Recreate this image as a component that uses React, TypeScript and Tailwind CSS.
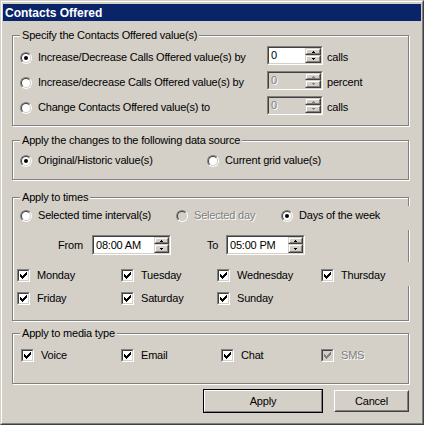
import React from 'react'

const disabledText = 'text-[#808080] [text-shadow:1px_1px_0_#fff]'

function Radio({ checked, disabled }: { checked?: boolean; disabled?: boolean }) {
    return (
        <span className="flex h-[12px] w-[12px] shrink-0 rounded-full border border-t-[#808080] border-l-[#808080] border-r-white border-b-white">
            <span
                className={`flex flex-1 items-center justify-center rounded-full border border-t-[#404040] border-l-[#404040] border-r-[#d4d0c8] border-b-[#d4d0c8] ${disabled ? 'bg-[#d4d0c8]' : 'bg-white'}`}
            >
                {checked && <span className="h-[4px] w-[4px] rounded-full bg-black" />}
            </span>
        </span>
    )
}

function CheckMark({ color }: { color: string }) {
    return (
        <svg width="7" height="7" viewBox="0 0 7 7" shapeRendering="crispEdges" fill={color}>
            <rect x="6" y="0" width="1" height="1" />
            <rect x="5" y="1" width="2" height="1" />
            <rect x="0" y="2" width="1" height="1" />
            <rect x="4" y="2" width="3" height="1" />
            <rect x="0" y="3" width="2" height="1" />
            <rect x="3" y="3" width="3" height="1" />
            <rect x="0" y="4" width="5" height="1" />
            <rect x="1" y="5" width="3" height="1" />
            <rect x="2" y="6" width="1" height="1" />
        </svg>
    )
}

function Checkbox({ label, disabled }: { label: string; disabled?: boolean }) {
    return (
        <label className="flex h-[13px] items-center">
            <span className="flex h-[13px] w-[13px] shrink-0 border border-t-[#808080] border-l-[#808080] border-r-white border-b-white">
                <span
                    className={`flex flex-1 items-center justify-center border border-t-[#404040] border-l-[#404040] border-r-[#d4d0c8] border-b-[#d4d0c8] ${disabled ? 'bg-[#d4d0c8]' : 'bg-white'}`}
                >
                    <CheckMark color={disabled ? '#808080' : '#000'} />
                </span>
            </span>
            <span className={`ml-[7px] leading-[13px] ${disabled ? disabledText : ''}`}>{label}</span>
        </label>
    )
}

function Arrow({ up, disabled }: { up?: boolean; disabled?: boolean }) {
    return (
        <svg width="3" height="2" viewBox="0 0 3 2" shapeRendering="crispEdges" fill={disabled ? '#808080' : '#000'}>
            {up ? (
                <>
                    <rect x="1" y="0" width="1" height="1" />
                    <rect x="0" y="1" width="3" height="1" />
                </>
            ) : (
                <>
                    <rect x="0" y="0" width="3" height="1" />
                    <rect x="1" y="1" width="1" height="1" />
                </>
            )}
        </svg>
    )
}

function SpinButton({ up, disabled, className }: { up?: boolean; disabled?: boolean; className?: string }) {
    return (
        <span className={`flex border border-t-[#d4d0c8] border-l-[#d4d0c8] border-r-[#404040] border-b-[#404040] bg-[#d4d0c8] ${className ?? ''}`}>
            <span className="flex flex-1 items-center justify-center border border-t-white border-l-white border-r-[#808080] border-b-[#808080]">
                <Arrow up={up} disabled={disabled} />
            </span>
        </span>
    )
}

function SpinBox({ value, disabled, className, btn }: { value: string; disabled?: boolean; className: string; btn: string }) {
    return (
        <div className={`flex shrink-0 border border-t-[#808080] border-l-[#808080] border-r-white border-b-white ${className}`}>
            <div
                className={`flex flex-1 border border-t-[#404040] border-l-[#404040] border-r-[#d4d0c8] border-b-[#d4d0c8] ${disabled ? 'bg-[#d4d0c8]' : 'bg-white'}`}
            >
                <span className={`flex-1 self-center pl-[2px] leading-[13px] ${disabled ? disabledText : ''}`}>{value}</span>
                <div className={`flex flex-col ${btn}`}>
                    <SpinButton up disabled={disabled} className="h-[7px]" />
                    <SpinButton disabled={disabled} className="flex-1" />
                </div>
            </div>
        </div>
    )
}

function Group({ legend, className, children }: { legend: string; className: string; children: React.ReactNode }) {
    return (
        <div className={`relative w-[397px] border border-[#808080] shadow-[inset_1px_1px_0_#fff,1px_1px_0_#fff] ${className}`}>
            <span className="absolute -top-[7px] left-[7px] bg-[#d4d0c8] px-[2px] leading-[13px]">{legend}</span>
            {children}
        </div>
    )
}

function RadioLabel({ text, checked, disabled, className }: { text: string; checked?: boolean; disabled?: boolean; className?: string }) {
    return (
        <label className={`flex h-[13px] items-center ${className ?? ''}`}>
            <Radio checked={checked} disabled={disabled} />
            <span className={`ml-[6px] leading-[13px] ${disabled ? disabledText : ''}`}>{text}</span>
        </label>
    )
}

const App: React.FC = () => {
    const offeredRows = [
        { text: 'Increase/Decrease Calls Offered value(s) by', unit: 'calls', checked: true, disabled: false },
        { text: 'Increase/decrease Calls Offered value(s) by', unit: 'percent', checked: false, disabled: true },
        { text: 'Change Contacts Offered value(s) to', unit: 'calls', checked: false, disabled: true },
    ]
    const days = ['Monday', 'Tuesday', 'Wednesday', 'Thursday', 'Friday', 'Saturday', 'Sunday']

    return (
        <div className="h-[425px] w-[424px] border border-t-[#d4d0c8] border-l-[#d4d0c8] border-r-[#404040] border-b-[#404040] bg-[#d4d0c8] font-['Liberation_Sans',Arial,sans-serif] text-[11px] tracking-[-0.2px] text-black">
            <div className="flex h-full flex-col border border-t-white border-l-white border-r-[#808080] border-b-[#808080] p-px">
                <div className="mt-px flex h-[17px] items-center bg-[#0a246a] pl-[2px] text-[12px] font-bold tracking-normal text-white">
                    Contacts Offered
                </div>

                <div className="ml-[9px] flex flex-col">
                    <Group legend="Specify the Contacts Offered value(s)" className="mt-[14px] h-[91px] pt-[10px] pl-[7px]">
                        <div className="flex flex-col gap-[6px]">
                            {offeredRows.map((row) => (
                                <div key={row.text + row.unit} className="flex items-start">
                                    <RadioLabel text={row.text} checked={row.checked} className="mt-[5px] w-[247px]" />
                                    <SpinBox value="0" disabled={row.disabled} className="h-[19px] w-[56px]" btn="w-[16px]" />
                                    <span className="mt-[5px] ml-[4px] leading-[13px]">{row.unit}</span>
                                </div>
                            ))}
                        </div>
                    </Group>

                    <Group legend="Apply the changes to the following data source" className="mt-[14px] h-[40px] pt-[13px] pl-[7px]">
                        <div className="flex">
                            <RadioLabel text="Original/Historic value(s)" checked className="w-[187px]" />
                            <RadioLabel text="Current grid value(s)" />
                        </div>
                    </Group>

                    <Group legend="Apply to times" className="mt-[17px] h-[124px] pt-[11px]">
                        <span className="absolute top-[8px] -right-[2px] h-[24px] w-[2px] bg-[#d4d0c8]" />
                        <span className="absolute top-[64px] -right-[2px] h-[24px] w-[2px] bg-[#d4d0c8]" />
                        <div className="ml-[7px] flex">
                            <RadioLabel text="Selected time interval(s)" className="w-[156px]" />
                            <RadioLabel text="Selected day" disabled className="w-[105px]" />
                            <RadioLabel text="Days of the week" checked />
                        </div>
                        <div className="mt-[13px] ml-[7px] flex h-[20px] items-center">
                            <span className="ml-[38px] w-[34px]">From</span>
                            <SpinBox value="08:00 AM" className="h-[20px] w-[79px]" btn="w-[15px]" />
                            <span className="ml-[36px] w-[19px]">To</span>
                            <SpinBox value="05:00 PM" className="h-[20px] w-[79px]" btn="w-[15px]" />
                        </div>
                        <div className="mt-[14px] ml-[4px] grid grid-cols-[104px_96px_104px_auto] gap-y-[10px]">
                            {days.map((d) => (
                                <Checkbox key={d} label={d} />
                            ))}
                        </div>
                    </Group>

                    <Group legend="Apply to media type" className="mt-[12px] h-[51px] pt-[15px]">
                        <div className="ml-[8px] grid grid-cols-[100px_100px_100px_auto]">
                            <Checkbox label="Voice" />
                            <Checkbox label="Email" />
                            <Checkbox label="Chat" />
                            <Checkbox label="SMS" disabled />
                        </div>
                    </Group>

                    <div className="mt-[5px] flex h-[24px] w-[397px] items-center justify-end gap-[11px]">
                        <button type="button" className="flex h-[24px] w-[120px] border border-black">
                            <span className="flex flex-1 items-center justify-center border border-t-white border-l-white border-r-[#808080] border-b-[#808080]">
                                Apply
                            </span>
                        </button>
                        <button
                            type="button"
                            className="flex h-[22px] w-[75px] border border-t-white border-l-white border-r-[#404040] border-b-[#404040]"
                        >
                            <span className="flex flex-1 items-center justify-center border border-t-[#d4d0c8] border-l-[#d4d0c8] border-r-[#808080] border-b-[#808080]">
                                Cancel
                            </span>
                        </button>
                    </div>
                </div>
            </div>
        </div>
    )
}

export default App
